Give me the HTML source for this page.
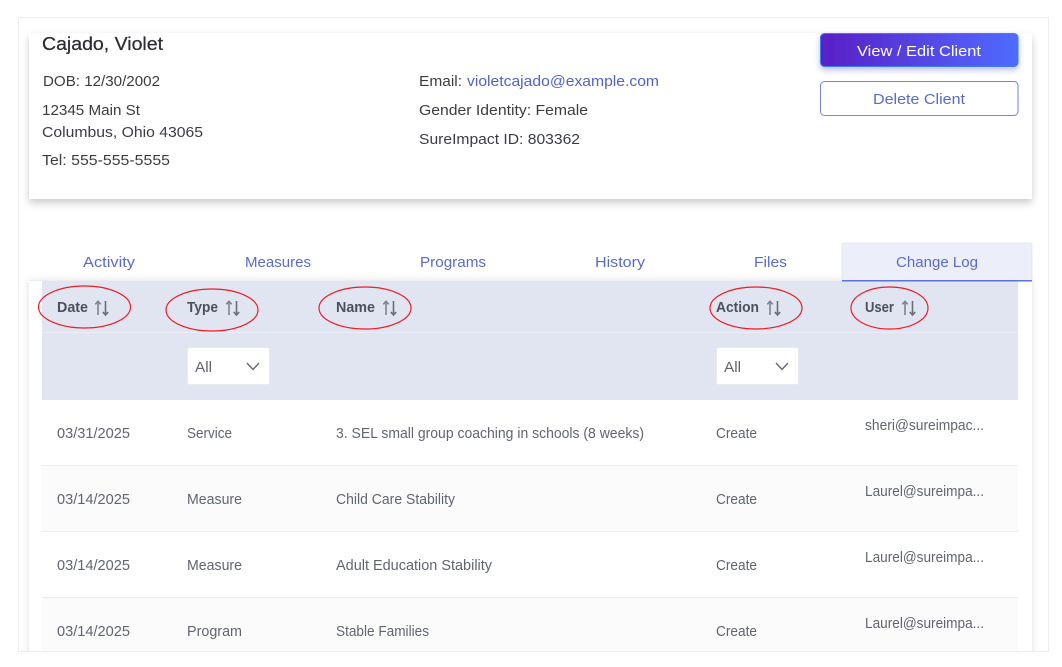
<!DOCTYPE html>
<html><head><meta charset="utf-8"><style>
html,body{margin:0;padding:0;background:#fff;width:1062px;height:667px;overflow:hidden}
svg{display:block;position:absolute;left:0;top:0}
text{font-family:"Liberation Sans",sans-serif;font-size:14.5px;fill:#3a3d42}
.l{fill:#5064c4}
.t{fill:#5a6cc8;font-size:14.5px}
.h{font-weight:bold;fill:#4b505c;font-size:14.5px}
.r{fill:#60656f;font-size:15px}
</style></head><body>
<svg width="1062" height="667" viewBox="0 0 1062 667" xmlns="http://www.w3.org/2000/svg">
<defs>
<linearGradient id="g" x1="0" y1="0" x2="1" y2="0"><stop offset="0" stop-color="#5a1fc6"/><stop offset="1" stop-color="#4f6bff"/></linearGradient>
<filter id="s" x="-5%" y="-20%" width="110%" height="140%"><feDropShadow dx="0" dy="4" stdDeviation="4" flood-color="#000" flood-opacity=".2"/></filter>
<filter id="s2" x="-5%" y="-5%" width="110%" height="110%"><feDropShadow dx="0" dy="0" stdDeviation="4" flood-color="#000" flood-opacity=".13"/></filter>
<filter id="s3" x="-10%" y="-30%" width="120%" height="170%"><feDropShadow dx="0" dy="3" stdDeviation="3" flood-color="#2030a0" flood-opacity=".3"/></filter>
<g id="ar" fill="none" stroke-width="1.6"><path stroke="#7d8492" d="M4 15V1.500M1.300 4.300 4 1.300 6.700 4.300"/><path stroke="#676d79" d="M11.500 1V14.800M8.800 12 11.500 15 14.200 12"/></g>
<path id="ch" d="M0 0 6 6.500 12 0" fill="none" stroke="#666b75" stroke-width="1.4"/>
</defs>

<rect x="18.500" y="17.500" width="1030" height="634" fill="#fff" stroke="#eeeeee"/>

<!-- client card -->
<rect x="29" y="33" width="1003" height="166" fill="#fff" filter="url(#s)"/>
<text x="42" y="50" textLength="121" lengthAdjust="spacingAndGlyphs" stroke="#2b2d31" stroke-width=".25" style="font-size:18px;fill:#2b2d31">Cajado, Violet</text>
<text x="43" y="86" textLength="117" lengthAdjust="spacingAndGlyphs">DOB: 12/30/2002</text>
<text x="42" y="115" textLength="98" lengthAdjust="spacingAndGlyphs">12345 Main St</text>
<text x="42" y="137" textLength="161" lengthAdjust="spacingAndGlyphs">Columbus, Ohio 43065</text>
<text x="42" y="165" textLength="128" lengthAdjust="spacingAndGlyphs">Tel: 555-555-5555</text>
<text x="419" y="86" textLength="43" lengthAdjust="spacingAndGlyphs">Email:</text>
<text x="467" y="86" textLength="192" lengthAdjust="spacingAndGlyphs" class="l">violetcajado@example.com</text>
<text x="419" y="115" textLength="169" lengthAdjust="spacingAndGlyphs">Gender Identity: Female</text>
<text x="419" y="144" textLength="161" lengthAdjust="spacingAndGlyphs">SureImpact ID: 803362</text>

<rect x="820.500" y="33.500" width="197.500" height="33" rx="4" fill="url(#g)" stroke="#3d7cf5" filter="url(#s3)"/>
<text x="857" y="56" textLength="124" lengthAdjust="spacingAndGlyphs" style="fill:#fff">View / Edit Client</text>
<rect x="820.500" y="81.500" width="197.500" height="34" rx="4" fill="#fff" stroke="#7286dc"/>
<text x="873" y="104" textLength="92" lengthAdjust="spacingAndGlyphs" class="t">Delete Client</text>

<!-- table card -->
<rect x="29" y="281" width="1003" height="400" fill="#fff" filter="url(#s2)"/>
<rect x="0" y="652" width="1062" height="15" fill="#fff"/>
<rect x="18" y="651" width="1031" height="1" fill="#eeeeee"/>
<rect x="18" y="270" width="1" height="381" fill="#eeeeee"/>
<rect x="1048" y="270" width="1" height="381" fill="#eeeeee"/>

<!-- tabs -->
<rect x="29" y="280" width="1003" height="1" fill="#ebedf3"/>
<path d="M842 281V245a2 2 0 0 1 2-2H1030a2 2 0 0 1 2 2V281Z" fill="#eceffa" stroke="#dfe3f0" stroke-width=".8"/>
<rect x="842" y="280" width="190" height="1.500" fill="#5b74d8"/>
<text x="83" y="267" textLength="52" lengthAdjust="spacingAndGlyphs" class="t">Activity</text>
<text x="245" y="267" textLength="66" lengthAdjust="spacingAndGlyphs" class="t">Measures</text>
<text x="420" y="267" textLength="66" lengthAdjust="spacingAndGlyphs" class="t">Programs</text>
<text x="595" y="267" textLength="50" lengthAdjust="spacingAndGlyphs" class="t">History</text>
<text x="754" y="267" textLength="33" lengthAdjust="spacingAndGlyphs" class="t">Files</text>
<text x="896" y="267" textLength="82" lengthAdjust="spacingAndGlyphs" class="t">Change Log</text>

<!-- head -->
<rect x="42" y="281" width="976" height="119" fill="#e1e5f1"/>
<rect x="842" y="280" width="176" height="1.500" fill="#5b74d8"/>
<rect x="42" y="332" width="976" height="1" fill="#ebeef6"/>
<text x="57" y="312" textLength="31" lengthAdjust="spacingAndGlyphs" class="h">Date</text>
<text x="187" y="312" textLength="31" lengthAdjust="spacingAndGlyphs" class="h">Type</text>
<text x="336" y="312" textLength="39" lengthAdjust="spacingAndGlyphs" class="h">Name</text>
<text x="716" y="312" textLength="43" lengthAdjust="spacingAndGlyphs" class="h">Action</text>
<text x="865" y="312" textLength="29" lengthAdjust="spacingAndGlyphs" class="h">User</text>
<use href="#ar" x="94" y="300"/>
<use href="#ar" x="225" y="300"/>
<use href="#ar" x="382" y="300"/>
<use href="#ar" x="766" y="300"/>
<use href="#ar" x="901" y="300"/>

<rect x="187.500" y="347.500" width="82" height="37" rx="2" fill="#fff" stroke="#e8eaf2"/>
<text x="195" y="372" textLength="17" lengthAdjust="spacingAndGlyphs" class="r">All</text>
<use href="#ch" x="247" y="363"/>
<rect x="716.500" y="347.500" width="82" height="37" rx="2" fill="#fff" stroke="#e8eaf2"/>
<text x="724" y="372" textLength="17" lengthAdjust="spacingAndGlyphs" class="r">All</text>
<use href="#ch" x="776" y="363"/>

<!-- rows -->
<rect x="42" y="466" width="976" height="66" fill="#fbfbfb"/>
<rect x="42" y="598" width="976" height="53" fill="#fbfbfb"/>
<rect x="42" y="465" width="976" height="1" fill="#eeeeee"/>
<rect x="42" y="531" width="976" height="1" fill="#eeeeee"/>
<rect x="42" y="597" width="976" height="1" fill="#eeeeee"/>

<text x="57" y="438" textLength="73" lengthAdjust="spacingAndGlyphs" class="r">03/31/2025</text>
<text x="187" y="438" textLength="45" lengthAdjust="spacingAndGlyphs" class="r">Service</text>
<text x="336" y="438" textLength="308" lengthAdjust="spacingAndGlyphs" class="r">3. SEL small group coaching in schools (8 weeks)</text>
<text x="716" y="438" textLength="41" lengthAdjust="spacingAndGlyphs" class="r">Create</text>
<text x="865" y="430" textLength="119" lengthAdjust="spacingAndGlyphs" class="r">sheri@sureimpac...</text>

<text x="57" y="504" textLength="73" lengthAdjust="spacingAndGlyphs" class="r">03/14/2025</text>
<text x="187" y="504" textLength="55" lengthAdjust="spacingAndGlyphs" class="r">Measure</text>
<text x="336" y="504" textLength="119" lengthAdjust="spacingAndGlyphs" class="r">Child Care Stability</text>
<text x="716" y="504" textLength="41" lengthAdjust="spacingAndGlyphs" class="r">Create</text>
<text x="865" y="496" textLength="119" lengthAdjust="spacingAndGlyphs" class="r">Laurel@sureimpa...</text>

<text x="57" y="570" textLength="73" lengthAdjust="spacingAndGlyphs" class="r">03/14/2025</text>
<text x="187" y="570" textLength="55" lengthAdjust="spacingAndGlyphs" class="r">Measure</text>
<text x="336" y="570" textLength="156" lengthAdjust="spacingAndGlyphs" class="r">Adult Education Stability</text>
<text x="716" y="570" textLength="41" lengthAdjust="spacingAndGlyphs" class="r">Create</text>
<text x="865" y="562" textLength="119" lengthAdjust="spacingAndGlyphs" class="r">Laurel@sureimpa...</text>

<text x="57" y="636" textLength="73" lengthAdjust="spacingAndGlyphs" class="r">03/14/2025</text>
<text x="187" y="636" textLength="55" lengthAdjust="spacingAndGlyphs" class="r">Program</text>
<text x="336" y="636" textLength="93" lengthAdjust="spacingAndGlyphs" class="r">Stable Families</text>
<text x="716" y="636" textLength="41" lengthAdjust="spacingAndGlyphs" class="r">Create</text>
<text x="865" y="628" textLength="119" lengthAdjust="spacingAndGlyphs" class="r">Laurel@sureimpa...</text>

<!-- red annotation ellipses -->
<g fill="none" stroke="#ee1c25" stroke-width="1.2">
<ellipse cx="84.500" cy="307" rx="46" ry="21"/>
<ellipse cx="212" cy="310" rx="46" ry="21"/>
<ellipse cx="365" cy="308" rx="46" ry="21"/>
<ellipse cx="756" cy="308" rx="46" ry="21"/>
<ellipse cx="889.500" cy="308" rx="38.500" ry="21"/>
</g>
</svg>
</body></html>
